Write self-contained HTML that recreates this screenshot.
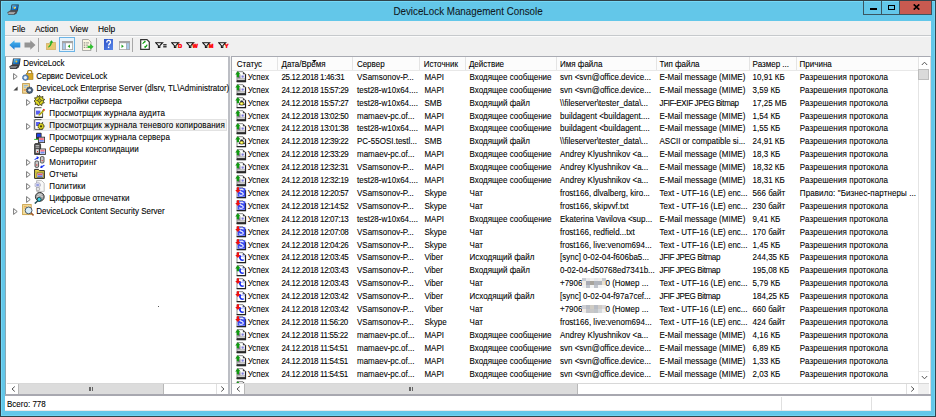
<!DOCTYPE html>
<html><head><meta charset="utf-8">
<style>
*{margin:0;padding:0;box-sizing:border-box}
html,body{width:936px;height:417px;overflow:hidden;background:#30444c}
body{position:relative;font-family:"Liberation Sans",sans-serif;color:#000}
.a{position:absolute}
#frame{position:absolute;left:1px;top:1px;width:934px;height:415px;background:#63c7e9;border-left:1px solid #76d8f6;border-top:1px solid #76d8f6;border-right:1px solid #70d4f2;border-bottom:1px solid #70d4f2}
#title{position:absolute;left:0;top:4.6px;width:936px;text-align:center;font-size:9.8px;color:#10181c;letter-spacing:0;transform:scaleY(1.1);transform-origin:0 0;-webkit-text-stroke:0.06px #000}
.cb{position:absolute;top:1px;height:13.5px;border:1px solid #3a5560;border-top:none}
#menu{position:absolute;left:5.3px;top:21.3px;width:625.4px;height:15px;background:#f0f0f0}
.mi{position:absolute;top:22.5px;font-size:8.4px;color:#000;transform:scaleY(1.15);transform-origin:0 0;-webkit-text-stroke:0.08px #000}
#tb{position:absolute;left:5.3px;top:36.3px;width:925.4px;height:20px;background:#f0f0f0}
.sep{position:absolute;top:37.5px;width:1px;height:14px;background:#a8a8a8}
.pane{position:absolute;background:#fff}
.tr{position:absolute;font-size:8px;color:#000;white-space:nowrap;line-height:12px;transform:scaleY(1.18);transform-origin:0 0;-webkit-text-stroke:0.08px #000}
.ex{position:absolute;width:0;height:0}
.t{position:absolute;font-size:8px;line-height:12.9px;white-space:nowrap;color:#000;transform:scaleY(1.18);transform-origin:0 0;-webkit-text-stroke:0.08px #000}
.t.d{letter-spacing:-0.34px}
.ic{position:absolute;width:12px;height:12px}
.ic svg{display:block}
.h{position:absolute;top:57.9px;font-size:8px;line-height:12.5px;white-space:nowrap;color:#000;transform:scaleY(1.18);transform-origin:0 0;-webkit-text-stroke:0.08px #000}
.hs{position:absolute;top:57.3px;width:1px;height:12.8px;background:#e4e4e4}
.blur{position:absolute;width:23.5px;height:8px;background:#d4d4d4}
.sb{position:absolute;background:#fff}
</style></head><body>
<div id="frame"></div>
<!-- app icon -->
<svg class="a" style="left:6.6px;top:4.2px" width="13" height="11" viewBox="0 0 13 11">
<defs><linearGradient id="scr" x1="0" x2="1" y1="0" y2="1"><stop offset="0" stop-color="#7ad0f8"/><stop offset="0.5" stop-color="#1878c8"/><stop offset="1" stop-color="#0a4a98"/></linearGradient></defs>
<path d="M4.6 0.5h7.2l-0.9 6.2h-7.4z" fill="#2a3440"/><path d="M5.3 1.2h5.8l-0.7 4.8h-6z" fill="url(#scr)"/>
<circle cx="7.6" cy="3.9" r="1.1" fill="#f0c840"/><circle cx="8.4" cy="3.2" r="0.6" fill="#ffffff" opacity="0.7"/>
<path d="M0.3 8.2l3.2-2h7.6l-1.6 3.2-1.8 1.4h-6.4z" fill="#4a4a4e"/><path d="M1.6 8.4h6.6M1.2 9.5h6" stroke="#d0d0d0" stroke-width="0.7"/>
</svg>
<div id="title">DeviceLock Management Console</div>
<div class="cb" style="left:863.3px;width:19px;"><div class="a" style="left:5.3px;top:7px;width:7.4px;height:2px;background:#000"></div></div>
<div class="cb" style="left:881.8px;width:18.6px;border-left:none"><div class="a" style="left:5.9px;top:3.6px;width:7.6px;height:5.8px;border:1.6px solid #000;border-top-width:1.9px"></div></div>
<div class="cb" style="left:900.2px;width:31.5px;background:#c75a50;border-left:none">
<svg class="a" style="left:12.6px;top:3.4px" width="7" height="6" viewBox="0 0 7 6"><path d="M0.7 0.4L6.3 5.6M6.3 0.4L0.7 5.6" stroke="#000" stroke-width="1.7"/></svg></div>
<!-- menu -->
<div class="a" style="left:5.3px;top:21.3px;width:925.4px;height:389.7px;background:#f0f0f0"></div>
<div class="mi" style="left:12px">File</div>
<div class="mi" style="left:35px">Action</div>
<div class="mi" style="left:70px">View</div>
<div class="mi" style="left:98px">Help</div>
<div id="tb"></div>
<div class="a" style="left:5.3px;top:35.4px;width:925.4px;height:1px;background:#c6c9cc"></div><div class="a" style="left:5.3px;top:36.4px;width:925.4px;height:1px;background:#fbfbfb"></div>
<!-- toolbar icons -->
<svg class="a" style="left:8.5px;top:40px" width="12" height="10" viewBox="0 0 12 10"><defs><linearGradient id="gb" x1="0" x2="0" y1="0" y2="1"><stop offset="0" stop-color="#4ab8f0"/><stop offset="1" stop-color="#1a78d0"/></linearGradient></defs>
<path d="M0.3 5L5.5 0.2V2.6H11.3V7.4H5.5V9.8z" fill="url(#gb)"/></svg>
<svg class="a" style="left:24px;top:40px" width="12" height="10" viewBox="0 0 12 10"><path d="M11.5 5L6.3 0.2V2.6H0.5V7.4H6.3V9.8z" fill="#949494"/></svg>
<div class="sep" style="left:38px"></div>
<svg class="a" style="left:46px;top:40px" width="10" height="10" viewBox="0 0 10 10"><path d="M0.3 3.5h3l1-1h5.4v7.2h-9.4z" fill="#e8c870" stroke="#c8a050" stroke-width="0.6"/><path d="M2 7q2-1 2.5-4.5l-1.2 0.2L5.5 0.3l1.8 2.2-1.3 0.2q-0.8 4-4 4.8z" fill="#20b020"/></svg>
<div class="a" style="left:58.9px;top:37.2px;width:16.1px;height:15.1px;border:1px solid #6cb4e6;background:#e6f2fb"></div>
<svg class="a" style="left:61.5px;top:41px" width="11" height="9" viewBox="0 0 11 9"><rect x="0" y="0" width="11" height="9" fill="#a4a4a4"/><rect x="0.8" y="2.2" width="2.6" height="6" fill="#a8c8e8"/><rect x="4" y="2.2" width="6.2" height="6" fill="#fff"/><path d="M8 3.5v3.5l-2.3-1.75z" fill="#20a020"/></svg>
<svg class="a" style="left:82px;top:39px" width="12" height="12" viewBox="0 0 12 12"><path d="M0.5 0.5h6l2.5 2.5v8.5h-8.5z" fill="#fbf7e0" stroke="#999" stroke-width="0.8"/><rect x="1.8" y="3.4" width="1" height="1" fill="#555"/><rect x="1.8" y="5.6" width="1" height="1" fill="#555"/><rect x="1.8" y="7.8" width="1" height="1" fill="#555"/><path d="M3.6 3.9h3.4M3.6 6.1h2.4M3.6 8.3h2" stroke="#777" stroke-width="0.7"/><path d="M5.6 6.8h2.6V4.8l3.4 3-3.4 3V9H5.6z" fill="#30c030"/></svg>
<div class="sep" style="left:95.5px"></div>
<svg class="a" style="left:103.8px;top:39px" width="9" height="11" viewBox="0 0 9 11"><defs><linearGradient id="gh" x1="0" x2="1" y1="0" y2="1"><stop offset="0" stop-color="#2a50c8"/><stop offset="1" stop-color="#5a88e8"/></linearGradient></defs><rect width="9" height="11" fill="url(#gh)"/><path d="M2.8 3.4q0-2 1.8-2q1.9 0 1.9 1.8q0 1-1.1 1.7q-0.7 0.5-0.7 1.6" stroke="#fff" stroke-width="1.3" fill="none"/><rect x="3.9" y="7.6" width="1.4" height="1.5" fill="#fff"/></svg>
<svg class="a" style="left:118.5px;top:41px" width="11" height="9" viewBox="0 0 11 9"><rect x="0" y="0" width="11" height="9" fill="#a4a4a4"/><rect x="0.8" y="2.2" width="6.2" height="6" fill="#fff"/><rect x="7.6" y="2.2" width="2.6" height="6" fill="#a8c8e8"/><path d="M2.5 3.5v3.5l2.3-1.75z" fill="#20a020"/></svg>
<div class="sep" style="left:132.3px"></div>
<svg class="a" style="left:140px;top:39px" width="10" height="11" viewBox="0 0 10 11"><path d="M0.7 0.7h6.3l2.3 2.3v7.3h-8.6z" fill="#fff" stroke="#333" stroke-width="1.2"/><path d="M2.8 5q0.4-2.2 2.4-2.2M7 5.6q-0.3 2.3-2.4 2.3" stroke="#10a010" stroke-width="1.1" fill="none"/><path d="M4.2 1.5l1.8 1.3-1.8 1.2zM5.8 9.2l-1.8-1.3 1.8-1.2z" fill="#10a010"/></svg>
<svg class="a" style="left:155px;top:41.5px" width="12" height="6" viewBox="0 0 12 6"><path d="M0.6 0.7h7l-2.8 3v2h-1.4v-2z" fill="#fff" stroke="#111" stroke-width="1.1"/><rect x="8.2" y="2.2" width="3.4" height="1.2" fill="#111"/><rect x="8.2" y="4.2" width="3.4" height="1.2" fill="#111"/></svg>
<svg class="a" style="left:170.5px;top:41.5px" width="13" height="6" viewBox="0 0 13 6"><path d="M0.6 0.7h7l-2.8 3v2h-1.4v-2z" fill="#fff" stroke="#111" stroke-width="1.1"/><text x="7" y="5.9" font-family="Liberation Sans" font-weight="bold" font-size="5.6" fill="#ff0000" stroke="#ff0000" stroke-width="0.45">D</text></svg>
<svg class="a" style="left:186.3px;top:41.5px" width="13" height="6" viewBox="0 0 13 6"><path d="M0.6 0.7h7l-2.8 3v2h-1.4v-2z" fill="#fff" stroke="#111" stroke-width="1.1"/><text x="6.6" y="5.9" font-family="Liberation Sans" font-weight="bold" font-size="5.6" fill="#ff0000" stroke="#ff0000" stroke-width="0.45">W</text></svg>
<svg class="a" style="left:201.8px;top:41.5px" width="13" height="6" viewBox="0 0 13 6"><path d="M0.6 0.7h7l-2.8 3v2h-1.4v-2z" fill="#fff" stroke="#111" stroke-width="1.1"/><text x="6.8" y="5.9" font-family="Liberation Sans" font-weight="bold" font-size="5.6" fill="#ff0000" stroke="#ff0000" stroke-width="0.45">M</text></svg>
<svg class="a" style="left:217.5px;top:41.5px" width="13" height="6" viewBox="0 0 13 6"><path d="M0.6 0.7h7l-2.8 3v2h-1.4v-2z" fill="#fff" stroke="#111" stroke-width="1.1"/><text x="6.8" y="5.9" font-family="Liberation Sans" font-weight="bold" font-size="5.6" fill="#ff0000" stroke="#ff0000" stroke-width="0.45">Y</text></svg>

<!-- tree pane -->
<div class="pane" style="left:5.2px;top:55.8px;width:224.6px;height:339px;border:1px solid #b4b6bc;border-left-color:#8aa8b2;border-right:2px solid #bcbec4"></div>
<!-- list pane -->
<div class="pane" style="left:231px;top:55.8px;width:699.5px;height:339px;border:1px solid #a8aab2;border-right-color:#d8d8d8"></div>
<div class="a" style="left:232px;top:57px;width:686px;height:14.1px;background:#fcfcfc;border-bottom:1px solid #e8e8e8"></div>
<div class="h" style="left:236.8px">Статус</div>
<div class="h" style="left:281.5px">Дата/Время</div>
<div class="h" style="left:356.9px">Сервер</div>
<div class="h" style="left:423.8px">Источник</div>
<div class="h" style="left:468.9px">Действие</div>
<div class="h" style="left:560px">Имя файла</div>
<div class="h" style="left:659.4px">Тип файла</div>
<div class="h" style="left:752.6px">Размер ...</div>
<div class="h" style="left:799.6px">Причина</div>
<div class="hs" style="left:277.2px"></div>
<div class="hs" style="left:352.3px"></div>
<div class="hs" style="left:419.3px"></div>
<div class="hs" style="left:465px"></div>
<div class="hs" style="left:555.5px"></div>
<div class="hs" style="left:655.5px"></div>
<div class="hs" style="left:749px"></div>
<div class="hs" style="left:795.5px"></div>
<svg class="a" style="left:312.2px;top:59.5px" width="5" height="3" viewBox="0 0 5 3"><path d="M0 0H4.6L2.3 2.4Z" fill="#111"/></svg>
<div class="a" style="left:0;top:0;width:936px;height:383.2px;overflow:hidden">
<div class="ic" style="left:234.5px;top:71.30px"><svg width="12" height="12" viewBox="0 0 12 12"><path d="M2 0.7H7.9L10.5 3.3V10.6H2Z" fill="#fff" stroke="#7a7a7a" stroke-width="0.9"/><path d="M10.5 3.2V10.7H1.6" stroke="#222" stroke-width="1.2" fill="none"/><path d="M7.9 0.7V3.3H10.5Z" fill="#444"/><rect x="2.2" y="7.4" width="8" height="1" fill="#8a8a8a"/><rect x="1.8" y="9.1" width="9" height="1.8" fill="#2a2a2a"/><rect x="5.4" y="3.9" width="4.4" height="3.3" fill="#e4e4ec"/><circle cx="7.7" cy="5.6" r="1.1" fill="#7a7ae0"/><rect x="2.4" y="4.2" width="3" height="3" fill="#8a7a90"/><path d="M0.2 3.5L2.9 0.3L5.6 3.5H4V6.3H1.8V3.5Z" fill="#109a10"/></svg></div>
<div class="t" style="left:247.8px;top:70.80px">Успех</div>
<div class="t d" style="left:281.5px;top:70.80px">25.12.2018 1:46:31</div>
<div class="t" style="left:357px;top:70.80px">VSamsonov-P...</div>
<div class="t" style="left:424.4px;top:70.80px">MAPI</div>
<div class="t" style="left:469.6px;top:70.80px">Входящее сообщение</div>
<div class="t" style="left:560px;top:70.80px">svn &lt;svn@office.device...</div>
<div class="t" style="left:659.5px;top:70.80px">E-Mail message (MIME)</div>
<div class="t" style="left:752.6px;top:70.80px">10,91 КБ</div>
<div class="t" style="left:799.8px;top:70.80px;letter-spacing:0.1px">Разрешения протокола</div>
<div class="ic" style="left:234.5px;top:84.20px"><svg width="12" height="12" viewBox="0 0 12 12"><path d="M2 0.7H7.9L10.5 3.3V10.6H2Z" fill="#fff" stroke="#7a7a7a" stroke-width="0.9"/><path d="M10.5 3.2V10.7H1.6" stroke="#222" stroke-width="1.2" fill="none"/><path d="M7.9 0.7V3.3H10.5Z" fill="#444"/><rect x="2.2" y="7.4" width="8" height="1" fill="#8a8a8a"/><rect x="1.8" y="9.1" width="9" height="1.8" fill="#2a2a2a"/><rect x="5.4" y="3.9" width="4.4" height="3.3" fill="#e4e4ec"/><circle cx="7.7" cy="5.6" r="1.1" fill="#7a7ae0"/><rect x="2.4" y="4.2" width="3" height="3" fill="#8a7a90"/><path d="M0.2 3.5L2.9 0.3L5.6 3.5H4V6.3H1.8V3.5Z" fill="#109a10"/></svg></div>
<div class="t" style="left:247.8px;top:83.70px">Успех</div>
<div class="t d" style="left:281.5px;top:83.70px">24.12.2018 15:57:29</div>
<div class="t" style="left:357px;top:83.70px">test28-w10x64....</div>
<div class="t" style="left:424.4px;top:83.70px">MAPI</div>
<div class="t" style="left:469.6px;top:83.70px">Входящее сообщение</div>
<div class="t" style="left:560px;top:83.70px">svn &lt;svn@office.device...</div>
<div class="t" style="left:659.5px;top:83.70px">E-Mail message (MIME)</div>
<div class="t" style="left:752.6px;top:83.70px">3,59 КБ</div>
<div class="t" style="left:799.8px;top:83.70px;letter-spacing:0.1px">Разрешения протокола</div>
<div class="ic" style="left:234.5px;top:97.10px"><svg width="12" height="12" viewBox="0 0 12 12"><path d="M2 0.7H7.9L10.5 3.3V10.6H2Z" fill="#fff" stroke="#7a7a7a" stroke-width="0.9"/><path d="M10.5 3.2V10.7H1.6" stroke="#222" stroke-width="1.2" fill="none"/><path d="M7.9 0.7V3.3H10.5Z" fill="#444"/><path d="M3.6 7.8Q5.6 2.8 7.4 3.4Q8.6 4.4 10 7.8Q6.8 9.4 3.6 7.8Z" fill="#2a2a3a"/><ellipse cx="6.7" cy="6.6" rx="1.9" ry="1.3" fill="#e8e020"/><ellipse cx="6.5" cy="6.4" rx="0.9" ry="0.6" fill="#fffca0"/><path d="M0.2 3.5L2.9 0.3L5.6 3.5H4V6.3H1.8V3.5Z" fill="#109a10"/></svg></div>
<div class="t" style="left:247.8px;top:96.60px">Успех</div>
<div class="t d" style="left:281.5px;top:96.60px">24.12.2018 15:57:27</div>
<div class="t" style="left:357px;top:96.60px">test28-w10x64....</div>
<div class="t" style="left:424.4px;top:96.60px">SMB</div>
<div class="t" style="left:469.6px;top:96.60px">Входящий файл</div>
<div class="t" style="left:560px;top:96.60px">\\fileserver\tester_data\...</div>
<div class="t" style="left:659.5px;top:96.60px;letter-spacing:-0.36px">JFIF-EXIF JPEG Bitmap</div>
<div class="t" style="left:752.6px;top:96.60px">17,25 МБ</div>
<div class="t" style="left:799.8px;top:96.60px;letter-spacing:0.1px">Разрешения протокола</div>
<div class="ic" style="left:234.5px;top:110.00px"><svg width="12" height="12" viewBox="0 0 12 12"><path d="M2 0.7H7.9L10.5 3.3V10.6H2Z" fill="#fff" stroke="#7a7a7a" stroke-width="0.9"/><path d="M10.5 3.2V10.7H1.6" stroke="#222" stroke-width="1.2" fill="none"/><path d="M7.9 0.7V3.3H10.5Z" fill="#444"/><rect x="2.2" y="7.4" width="8" height="1" fill="#8a8a8a"/><rect x="1.8" y="9.1" width="9" height="1.8" fill="#2a2a2a"/><rect x="5.4" y="3.9" width="4.4" height="3.3" fill="#e4e4ec"/><circle cx="7.7" cy="5.6" r="1.1" fill="#7a7ae0"/><rect x="2.4" y="4.2" width="3" height="3" fill="#8a7a90"/><path d="M0.2 3.5L2.9 0.3L5.6 3.5H4V6.3H1.8V3.5Z" fill="#109a10"/></svg></div>
<div class="t" style="left:247.8px;top:109.50px">Успех</div>
<div class="t d" style="left:281.5px;top:109.50px">24.12.2018 13:02:50</div>
<div class="t" style="left:357px;top:109.50px">mamaev-pc.of...</div>
<div class="t" style="left:424.4px;top:109.50px">MAPI</div>
<div class="t" style="left:469.6px;top:109.50px">Входящее сообщение</div>
<div class="t" style="left:560px;top:109.50px">buildagent &lt;buildagent....</div>
<div class="t" style="left:659.5px;top:109.50px">E-Mail message (MIME)</div>
<div class="t" style="left:752.6px;top:109.50px">1,54 КБ</div>
<div class="t" style="left:799.8px;top:109.50px;letter-spacing:0.1px">Разрешения протокола</div>
<div class="ic" style="left:234.5px;top:122.90px"><svg width="12" height="12" viewBox="0 0 12 12"><path d="M2 0.7H7.9L10.5 3.3V10.6H2Z" fill="#fff" stroke="#7a7a7a" stroke-width="0.9"/><path d="M10.5 3.2V10.7H1.6" stroke="#222" stroke-width="1.2" fill="none"/><path d="M7.9 0.7V3.3H10.5Z" fill="#444"/><rect x="2.2" y="7.4" width="8" height="1" fill="#8a8a8a"/><rect x="1.8" y="9.1" width="9" height="1.8" fill="#2a2a2a"/><rect x="5.4" y="3.9" width="4.4" height="3.3" fill="#e4e4ec"/><circle cx="7.7" cy="5.6" r="1.1" fill="#7a7ae0"/><rect x="2.4" y="4.2" width="3" height="3" fill="#8a7a90"/><path d="M0.2 3.5L2.9 0.3L5.6 3.5H4V6.3H1.8V3.5Z" fill="#109a10"/></svg></div>
<div class="t" style="left:247.8px;top:122.40px">Успех</div>
<div class="t d" style="left:281.5px;top:122.40px">24.12.2018 13:01:38</div>
<div class="t" style="left:357px;top:122.40px">test28-w10x64....</div>
<div class="t" style="left:424.4px;top:122.40px">MAPI</div>
<div class="t" style="left:469.6px;top:122.40px">Входящее сообщение</div>
<div class="t" style="left:560px;top:122.40px">buildagent &lt;buildagent....</div>
<div class="t" style="left:659.5px;top:122.40px">E-Mail message (MIME)</div>
<div class="t" style="left:752.6px;top:122.40px">1,55 КБ</div>
<div class="t" style="left:799.8px;top:122.40px;letter-spacing:0.1px">Разрешения протокола</div>
<div class="ic" style="left:234.5px;top:135.80px"><svg width="12" height="12" viewBox="0 0 12 12"><path d="M2 0.7H7.9L10.5 3.3V10.6H2Z" fill="#fff" stroke="#7a7a7a" stroke-width="0.9"/><path d="M10.5 3.2V10.7H1.6" stroke="#222" stroke-width="1.2" fill="none"/><path d="M7.9 0.7V3.3H10.5Z" fill="#444"/><path d="M3.6 7.8Q5.6 2.8 7.4 3.4Q8.6 4.4 10 7.8Q6.8 9.4 3.6 7.8Z" fill="#2a2a3a"/><ellipse cx="6.7" cy="6.6" rx="1.9" ry="1.3" fill="#e8e020"/><ellipse cx="6.5" cy="6.4" rx="0.9" ry="0.6" fill="#fffca0"/><path d="M0.2 3.5L2.9 0.3L5.6 3.5H4V6.3H1.8V3.5Z" fill="#109a10"/></svg></div>
<div class="t" style="left:247.8px;top:135.30px">Успех</div>
<div class="t d" style="left:281.5px;top:135.30px">24.12.2018 12:39:22</div>
<div class="t" style="left:357px;top:135.30px">PC-55OSI.testl...</div>
<div class="t" style="left:424.4px;top:135.30px">SMB</div>
<div class="t" style="left:469.6px;top:135.30px">Входящий файл</div>
<div class="t" style="left:560px;top:135.30px">\\fileserver\tester_data\...</div>
<div class="t" style="left:659.5px;top:135.30px">ASCII or compatible si...</div>
<div class="t" style="left:752.6px;top:135.30px">24,91 КБ</div>
<div class="t" style="left:799.8px;top:135.30px;letter-spacing:0.1px">Разрешения протокола</div>
<div class="ic" style="left:234.5px;top:148.70px"><svg width="12" height="12" viewBox="0 0 12 12"><path d="M2 0.7H7.9L10.5 3.3V10.6H2Z" fill="#fff" stroke="#7a7a7a" stroke-width="0.9"/><path d="M10.5 3.2V10.7H1.6" stroke="#222" stroke-width="1.2" fill="none"/><path d="M7.9 0.7V3.3H10.5Z" fill="#444"/><rect x="2.2" y="7.4" width="8" height="1" fill="#8a8a8a"/><rect x="1.8" y="9.1" width="9" height="1.8" fill="#2a2a2a"/><rect x="5.4" y="3.9" width="4.4" height="3.3" fill="#e4e4ec"/><circle cx="7.7" cy="5.6" r="1.1" fill="#7a7ae0"/><rect x="2.4" y="4.2" width="3" height="3" fill="#8a7a90"/><path d="M0.2 3.5L2.9 0.3L5.6 3.5H4V6.3H1.8V3.5Z" fill="#109a10"/></svg></div>
<div class="t" style="left:247.8px;top:148.20px">Успех</div>
<div class="t d" style="left:281.5px;top:148.20px">24.12.2018 12:33:29</div>
<div class="t" style="left:357px;top:148.20px">mamaev-pc.of...</div>
<div class="t" style="left:424.4px;top:148.20px">MAPI</div>
<div class="t" style="left:469.6px;top:148.20px">Входящее сообщение</div>
<div class="t" style="left:560px;top:148.20px">Andrey Klyushnikov &lt;a...</div>
<div class="t" style="left:659.5px;top:148.20px">E-Mail message (MIME)</div>
<div class="t" style="left:752.6px;top:148.20px">18,3 КБ</div>
<div class="t" style="left:799.8px;top:148.20px;letter-spacing:0.1px">Разрешения протокола</div>
<div class="ic" style="left:234.5px;top:161.60px"><svg width="12" height="12" viewBox="0 0 12 12"><path d="M2 0.7H7.9L10.5 3.3V10.6H2Z" fill="#fff" stroke="#7a7a7a" stroke-width="0.9"/><path d="M10.5 3.2V10.7H1.6" stroke="#222" stroke-width="1.2" fill="none"/><path d="M7.9 0.7V3.3H10.5Z" fill="#444"/><rect x="2.2" y="7.4" width="8" height="1" fill="#8a8a8a"/><rect x="1.8" y="9.1" width="9" height="1.8" fill="#2a2a2a"/><rect x="5.4" y="3.9" width="4.4" height="3.3" fill="#e4e4ec"/><circle cx="7.7" cy="5.6" r="1.1" fill="#7a7ae0"/><rect x="2.4" y="4.2" width="3" height="3" fill="#8a7a90"/><path d="M0.2 3.5L2.9 0.3L5.6 3.5H4V6.3H1.8V3.5Z" fill="#109a10"/></svg></div>
<div class="t" style="left:247.8px;top:161.10px">Успех</div>
<div class="t d" style="left:281.5px;top:161.10px">24.12.2018 12:32:31</div>
<div class="t" style="left:357px;top:161.10px">VSamsonov-P...</div>
<div class="t" style="left:424.4px;top:161.10px">MAPI</div>
<div class="t" style="left:469.6px;top:161.10px">Входящее сообщение</div>
<div class="t" style="left:560px;top:161.10px">Andrey Klyushnikov &lt;a...</div>
<div class="t" style="left:659.5px;top:161.10px">E-Mail message (MIME)</div>
<div class="t" style="left:752.6px;top:161.10px">18,32 КБ</div>
<div class="t" style="left:799.8px;top:161.10px;letter-spacing:0.1px">Разрешения протокола</div>
<div class="ic" style="left:234.5px;top:174.50px"><svg width="12" height="12" viewBox="0 0 12 12"><path d="M2 0.7H7.9L10.5 3.3V10.6H2Z" fill="#fff" stroke="#7a7a7a" stroke-width="0.9"/><path d="M10.5 3.2V10.7H1.6" stroke="#222" stroke-width="1.2" fill="none"/><path d="M7.9 0.7V3.3H10.5Z" fill="#444"/><rect x="2.2" y="7.4" width="8" height="1" fill="#8a8a8a"/><rect x="1.8" y="9.1" width="9" height="1.8" fill="#2a2a2a"/><rect x="5.4" y="3.9" width="4.4" height="3.3" fill="#e4e4ec"/><circle cx="7.7" cy="5.6" r="1.1" fill="#7a7ae0"/><rect x="2.4" y="4.2" width="3" height="3" fill="#8a7a90"/><path d="M0.2 3.5L2.9 0.3L5.6 3.5H4V6.3H1.8V3.5Z" fill="#109a10"/></svg></div>
<div class="t" style="left:247.8px;top:174.00px">Успех</div>
<div class="t d" style="left:281.5px;top:174.00px">24.12.2018 12:32:19</div>
<div class="t" style="left:357px;top:174.00px">test28-w10x64....</div>
<div class="t" style="left:424.4px;top:174.00px">MAPI</div>
<div class="t" style="left:469.6px;top:174.00px">Входящее сообщение</div>
<div class="t" style="left:560px;top:174.00px">Andrey Klyushnikov &lt;a...</div>
<div class="t" style="left:659.5px;top:174.00px">E-Mail message (MIME)</div>
<div class="t" style="left:752.6px;top:174.00px">18,31 КБ</div>
<div class="t" style="left:799.8px;top:174.00px;letter-spacing:0.1px">Разрешения протокола</div>
<div class="ic" style="left:234.5px;top:187.40px"><svg width="12" height="12" viewBox="0 0 12 12"><path d="M2 0.7H7.9L10.5 3.3V10.6H2Z" fill="#fff" stroke="#7a7a7a" stroke-width="0.9"/><path d="M10.5 3.2V10.7H1.6" stroke="#222" stroke-width="1.2" fill="none"/><path d="M7.9 0.7V3.3H10.5Z" fill="#444"/><rect x="2.7" y="1.3" width="7.6" height="8.4" fill="#3848f0"/><path d="M8.6 3.2Q7 1.8 5.2 2.8Q3.8 3.8 5.6 4.9L7.4 5.8Q9 7 7.6 8Q5.6 8.9 4 7.6" stroke="#e8ecff" stroke-width="1.2" fill="none"/><path d="M1.8 0.3H4V3.1H5.6L2.9 6.1L0.2 3.1H1.8Z" fill="#f01010"/></svg></div>
<div class="t" style="left:247.8px;top:186.90px">Успех</div>
<div class="t d" style="left:281.5px;top:186.90px">24.12.2018 12:20:57</div>
<div class="t" style="left:357px;top:186.90px">VSamsonov-P...</div>
<div class="t" style="left:424.4px;top:186.90px">Skype</div>
<div class="t" style="left:469.6px;top:186.90px">Чат</div>
<div class="t" style="left:560px;top:186.90px">frost166, dlvalberg, kiro...</div>
<div class="t" style="left:659.5px;top:186.90px">Text - UTF-16 (LE) enc...</div>
<div class="t" style="left:752.6px;top:186.90px">566 байт</div>
<div class="t" style="left:799.8px;top:186.90px;letter-spacing:0.1px">Правило: "Бизнес-партнеры ...</div>
<div class="ic" style="left:234.5px;top:200.30px"><svg width="12" height="12" viewBox="0 0 12 12"><path d="M2 0.7H7.9L10.5 3.3V10.6H2Z" fill="#fff" stroke="#7a7a7a" stroke-width="0.9"/><path d="M10.5 3.2V10.7H1.6" stroke="#222" stroke-width="1.2" fill="none"/><path d="M7.9 0.7V3.3H10.5Z" fill="#444"/><rect x="2.7" y="1.3" width="7.6" height="8.4" fill="#3848f0"/><path d="M8.6 3.2Q7 1.8 5.2 2.8Q3.8 3.8 5.6 4.9L7.4 5.8Q9 7 7.6 8Q5.6 8.9 4 7.6" stroke="#e8ecff" stroke-width="1.2" fill="none"/><path d="M1.8 0.3H4V3.1H5.6L2.9 6.1L0.2 3.1H1.8Z" fill="#f01010"/></svg></div>
<div class="t" style="left:247.8px;top:199.80px">Успех</div>
<div class="t d" style="left:281.5px;top:199.80px">24.12.2018 12:14:52</div>
<div class="t" style="left:357px;top:199.80px">VSamsonov-P...</div>
<div class="t" style="left:424.4px;top:199.80px">Skype</div>
<div class="t" style="left:469.6px;top:199.80px">Чат</div>
<div class="t" style="left:560px;top:199.80px">frost166, skipvvf.txt</div>
<div class="t" style="left:659.5px;top:199.80px">Text - UTF-16 (LE) enc...</div>
<div class="t" style="left:752.6px;top:199.80px">230 байт</div>
<div class="t" style="left:799.8px;top:199.80px;letter-spacing:0.1px">Разрешения протокола</div>
<div class="ic" style="left:234.5px;top:213.20px"><svg width="12" height="12" viewBox="0 0 12 12"><path d="M2 0.7H7.9L10.5 3.3V10.6H2Z" fill="#fff" stroke="#7a7a7a" stroke-width="0.9"/><path d="M10.5 3.2V10.7H1.6" stroke="#222" stroke-width="1.2" fill="none"/><path d="M7.9 0.7V3.3H10.5Z" fill="#444"/><rect x="2.2" y="7.4" width="8" height="1" fill="#8a8a8a"/><rect x="1.8" y="9.1" width="9" height="1.8" fill="#2a2a2a"/><rect x="5.4" y="3.9" width="4.4" height="3.3" fill="#e4e4ec"/><circle cx="7.7" cy="5.6" r="1.1" fill="#7a7ae0"/><rect x="2.4" y="4.2" width="3" height="3" fill="#8a7a90"/><path d="M0.2 3.5L2.9 0.3L5.6 3.5H4V6.3H1.8V3.5Z" fill="#109a10"/></svg></div>
<div class="t" style="left:247.8px;top:212.70px">Успех</div>
<div class="t d" style="left:281.5px;top:212.70px">24.12.2018 12:07:13</div>
<div class="t" style="left:357px;top:212.70px">test28-w10x64....</div>
<div class="t" style="left:424.4px;top:212.70px">MAPI</div>
<div class="t" style="left:469.6px;top:212.70px">Входящее сообщение</div>
<div class="t" style="left:560px;top:212.70px">Ekaterina Vavilova &lt;sup...</div>
<div class="t" style="left:659.5px;top:212.70px">E-Mail message (MIME)</div>
<div class="t" style="left:752.6px;top:212.70px">9,41 КБ</div>
<div class="t" style="left:799.8px;top:212.70px;letter-spacing:0.1px">Разрешения протокола</div>
<div class="ic" style="left:234.5px;top:226.10px"><svg width="12" height="12" viewBox="0 0 12 12"><path d="M2 0.7H7.9L10.5 3.3V10.6H2Z" fill="#fff" stroke="#7a7a7a" stroke-width="0.9"/><path d="M10.5 3.2V10.7H1.6" stroke="#222" stroke-width="1.2" fill="none"/><path d="M7.9 0.7V3.3H10.5Z" fill="#444"/><rect x="2.7" y="1.3" width="7.6" height="8.4" fill="#3848f0"/><path d="M8.6 3.2Q7 1.8 5.2 2.8Q3.8 3.8 5.6 4.9L7.4 5.8Q9 7 7.6 8Q5.6 8.9 4 7.6" stroke="#e8ecff" stroke-width="1.2" fill="none"/><path d="M1.8 0.3H4V3.1H5.6L2.9 6.1L0.2 3.1H1.8Z" fill="#f01010"/></svg></div>
<div class="t" style="left:247.8px;top:225.60px">Успех</div>
<div class="t d" style="left:281.5px;top:225.60px">24.12.2018 12:07:08</div>
<div class="t" style="left:357px;top:225.60px">VSamsonov-P...</div>
<div class="t" style="left:424.4px;top:225.60px">Skype</div>
<div class="t" style="left:469.6px;top:225.60px">Чат</div>
<div class="t" style="left:560px;top:225.60px">frost166, redfield...txt</div>
<div class="t" style="left:659.5px;top:225.60px">Text - UTF-16 (LE) enc...</div>
<div class="t" style="left:752.6px;top:225.60px">170 байт</div>
<div class="t" style="left:799.8px;top:225.60px;letter-spacing:0.1px">Разрешения протокола</div>
<div class="ic" style="left:234.5px;top:239.00px"><svg width="12" height="12" viewBox="0 0 12 12"><path d="M2 0.7H7.9L10.5 3.3V10.6H2Z" fill="#fff" stroke="#7a7a7a" stroke-width="0.9"/><path d="M10.5 3.2V10.7H1.6" stroke="#222" stroke-width="1.2" fill="none"/><path d="M7.9 0.7V3.3H10.5Z" fill="#444"/><rect x="2.7" y="1.3" width="7.6" height="8.4" fill="#3848f0"/><path d="M8.6 3.2Q7 1.8 5.2 2.8Q3.8 3.8 5.6 4.9L7.4 5.8Q9 7 7.6 8Q5.6 8.9 4 7.6" stroke="#e8ecff" stroke-width="1.2" fill="none"/><path d="M1.8 0.3H4V3.1H5.6L2.9 6.1L0.2 3.1H1.8Z" fill="#f01010"/></svg></div>
<div class="t" style="left:247.8px;top:238.50px">Успех</div>
<div class="t d" style="left:281.5px;top:238.50px">24.12.2018 12:04:26</div>
<div class="t" style="left:357px;top:238.50px">VSamsonov-P...</div>
<div class="t" style="left:424.4px;top:238.50px">Skype</div>
<div class="t" style="left:469.6px;top:238.50px">Чат</div>
<div class="t" style="left:560px;top:238.50px">frost166, live:venom694...</div>
<div class="t" style="left:659.5px;top:238.50px">Text - UTF-16 (LE) enc...</div>
<div class="t" style="left:752.6px;top:238.50px">1,45 КБ</div>
<div class="t" style="left:799.8px;top:238.50px;letter-spacing:0.1px">Разрешения протокола</div>
<div class="ic" style="left:234.5px;top:251.90px"><svg width="12" height="12" viewBox="0 0 12 12"><path d="M2 0.7H7.9L10.5 3.3V10.6H2Z" fill="#fff" stroke="#7a7a7a" stroke-width="0.9"/><path d="M10.5 3.2V10.7H1.6" stroke="#222" stroke-width="1.2" fill="none"/><path d="M7.9 0.7V3.3H10.5Z" fill="#444"/><path d="M4.2 3.8Q3.2 6.4 5.2 8.2Q7 9.6 9 8.6L8.6 7.3L7.2 7.6Q5.6 6.8 5.8 5.2L6.6 4.5L5.6 3.3Z" fill="#1a30f0"/><path d="M7 2.4Q9.2 2.8 9.6 5M6.8 3.8Q8.2 4 8.4 5.4" stroke="#98a8ff" stroke-width="0.9" fill="none"/><path d="M1.8 0.3H4V3.1H5.6L2.9 6.1L0.2 3.1H1.8Z" fill="#f01010"/></svg></div>
<div class="t" style="left:247.8px;top:251.40px">Успех</div>
<div class="t d" style="left:281.5px;top:251.40px">24.12.2018 12:03:45</div>
<div class="t" style="left:357px;top:251.40px">VSamsonov-P...</div>
<div class="t" style="left:424.4px;top:251.40px">Viber</div>
<div class="t" style="left:469.6px;top:251.40px">Исходящий файл</div>
<div class="t" style="left:560px;top:251.40px">[sync] 0-02-04-f606ba5...</div>
<div class="t" style="left:659.5px;top:251.40px;letter-spacing:-0.36px">JFIF JPEG Bitmap</div>
<div class="t" style="left:752.6px;top:251.40px">244,35 КБ</div>
<div class="t" style="left:799.8px;top:251.40px;letter-spacing:0.1px">Разрешения протокола</div>
<div class="ic" style="left:234.5px;top:264.80px"><svg width="12" height="12" viewBox="0 0 12 12"><path d="M2 0.7H7.9L10.5 3.3V10.6H2Z" fill="#fff" stroke="#7a7a7a" stroke-width="0.9"/><path d="M10.5 3.2V10.7H1.6" stroke="#222" stroke-width="1.2" fill="none"/><path d="M7.9 0.7V3.3H10.5Z" fill="#444"/><path d="M4.2 3.8Q3.2 6.4 5.2 8.2Q7 9.6 9 8.6L8.6 7.3L7.2 7.6Q5.6 6.8 5.8 5.2L6.6 4.5L5.6 3.3Z" fill="#1a30f0"/><path d="M7 2.4Q9.2 2.8 9.6 5M6.8 3.8Q8.2 4 8.4 5.4" stroke="#98a8ff" stroke-width="0.9" fill="none"/><path d="M0.2 3.5L2.9 0.3L5.6 3.5H4V6.3H1.8V3.5Z" fill="#109a10"/></svg></div>
<div class="t" style="left:247.8px;top:264.30px">Успех</div>
<div class="t d" style="left:281.5px;top:264.30px">24.12.2018 12:03:43</div>
<div class="t" style="left:357px;top:264.30px">VSamsonov-P...</div>
<div class="t" style="left:424.4px;top:264.30px">Viber</div>
<div class="t" style="left:469.6px;top:264.30px">Входящий файл</div>
<div class="t" style="left:560px;top:264.30px">0-02-04-d50768ed7341b...</div>
<div class="t" style="left:659.5px;top:264.30px;letter-spacing:-0.36px">JFIF JPEG Bitmap</div>
<div class="t" style="left:752.6px;top:264.30px">195,08 КБ</div>
<div class="t" style="left:799.8px;top:264.30px;letter-spacing:0.1px">Разрешения протокола</div>
<div class="ic" style="left:234.5px;top:277.70px"><svg width="12" height="12" viewBox="0 0 12 12"><path d="M2 0.7H7.9L10.5 3.3V10.6H2Z" fill="#fff" stroke="#7a7a7a" stroke-width="0.9"/><path d="M10.5 3.2V10.7H1.6" stroke="#222" stroke-width="1.2" fill="none"/><path d="M7.9 0.7V3.3H10.5Z" fill="#444"/><path d="M4.2 3.8Q3.2 6.4 5.2 8.2Q7 9.6 9 8.6L8.6 7.3L7.2 7.6Q5.6 6.8 5.8 5.2L6.6 4.5L5.6 3.3Z" fill="#1a30f0"/><path d="M7 2.4Q9.2 2.8 9.6 5M6.8 3.8Q8.2 4 8.4 5.4" stroke="#98a8ff" stroke-width="0.9" fill="none"/><path d="M1.8 0.3H4V3.1H5.6L2.9 6.1L0.2 3.1H1.8Z" fill="#f01010"/></svg></div>
<div class="t" style="left:247.8px;top:277.20px">Успех</div>
<div class="t d" style="left:281.5px;top:277.20px">24.12.2018 12:03:43</div>
<div class="t" style="left:357px;top:277.20px">VSamsonov-P...</div>
<div class="t" style="left:424.4px;top:277.20px">Viber</div>
<div class="t" style="left:469.6px;top:277.20px">Чат</div>
<div class="t" style="left:560px;top:277.20px">+7906</div>
<div class="a" style="left:582.0px;top:278.10px;width:4px;height:2.9px;background:#c8ccd4"></div><div class="a" style="left:586.0px;top:278.10px;width:4px;height:2.9px;background:#e8e8ea"></div><div class="a" style="left:590.0px;top:278.10px;width:4px;height:2.9px;background:#f0f0f0"></div><div class="a" style="left:594.0px;top:278.10px;width:4px;height:2.9px;background:#e8e8ea"></div><div class="a" style="left:598.0px;top:278.10px;width:4px;height:2.9px;background:#f0eeea"></div><div class="a" style="left:602.0px;top:278.10px;width:4px;height:2.9px;background:#c8ccd4"></div><div class="a" style="left:582.0px;top:281.00px;width:4px;height:4.1px;background:#f0ece4"></div><div class="a" style="left:586.0px;top:281.00px;width:4px;height:4.1px;background:#a8aab4"></div><div class="a" style="left:590.0px;top:281.00px;width:4px;height:4.1px;background:#a8a49c"></div><div class="a" style="left:594.0px;top:281.00px;width:4px;height:4.1px;background:#b0b4bc"></div><div class="a" style="left:598.0px;top:281.00px;width:4px;height:4.1px;background:#b0b4bc"></div><div class="a" style="left:602.0px;top:281.00px;width:4px;height:4.1px;background:#e8e0d0"></div><div class="a" style="left:582.0px;top:285.10px;width:4px;height:2.7px;background:#f0f0f0"></div><div class="a" style="left:586.0px;top:285.10px;width:4px;height:2.7px;background:#c0c4cc"></div><div class="a" style="left:590.0px;top:285.10px;width:4px;height:2.7px;background:#f4f4f4"></div><div class="a" style="left:594.0px;top:285.10px;width:4px;height:2.7px;background:#c0c4cc"></div><div class="a" style="left:598.0px;top:285.10px;width:4px;height:2.7px;background:#f4f4f4"></div><div class="a" style="left:602.0px;top:285.10px;width:4px;height:2.7px;background:#f8f8f8"></div>
<div class="t" style="left:605.5px;top:277.20px">0 (Номер ...</div>
<div class="t" style="left:659.5px;top:277.20px">Text - UTF-16 (LE) enc...</div>
<div class="t" style="left:752.6px;top:277.20px">5,79 КБ</div>
<div class="t" style="left:799.8px;top:277.20px;letter-spacing:0.1px">Разрешения протокола</div>
<div class="ic" style="left:234.5px;top:290.60px"><svg width="12" height="12" viewBox="0 0 12 12"><path d="M2 0.7H7.9L10.5 3.3V10.6H2Z" fill="#fff" stroke="#7a7a7a" stroke-width="0.9"/><path d="M10.5 3.2V10.7H1.6" stroke="#222" stroke-width="1.2" fill="none"/><path d="M7.9 0.7V3.3H10.5Z" fill="#444"/><path d="M4.2 3.8Q3.2 6.4 5.2 8.2Q7 9.6 9 8.6L8.6 7.3L7.2 7.6Q5.6 6.8 5.8 5.2L6.6 4.5L5.6 3.3Z" fill="#1a30f0"/><path d="M7 2.4Q9.2 2.8 9.6 5M6.8 3.8Q8.2 4 8.4 5.4" stroke="#98a8ff" stroke-width="0.9" fill="none"/><path d="M1.8 0.3H4V3.1H5.6L2.9 6.1L0.2 3.1H1.8Z" fill="#f01010"/></svg></div>
<div class="t" style="left:247.8px;top:290.10px">Успех</div>
<div class="t d" style="left:281.5px;top:290.10px">24.12.2018 12:03:42</div>
<div class="t" style="left:357px;top:290.10px">VSamsonov-P...</div>
<div class="t" style="left:424.4px;top:290.10px">Viber</div>
<div class="t" style="left:469.6px;top:290.10px">Исходящий файл</div>
<div class="t" style="left:560px;top:290.10px">[sync] 0-02-04-f97a7cef...</div>
<div class="t" style="left:659.5px;top:290.10px;letter-spacing:-0.36px">JFIF JPEG Bitmap</div>
<div class="t" style="left:752.6px;top:290.10px">184,25 КБ</div>
<div class="t" style="left:799.8px;top:290.10px;letter-spacing:0.1px">Разрешения протокола</div>
<div class="ic" style="left:234.5px;top:303.50px"><svg width="12" height="12" viewBox="0 0 12 12"><path d="M2 0.7H7.9L10.5 3.3V10.6H2Z" fill="#fff" stroke="#7a7a7a" stroke-width="0.9"/><path d="M10.5 3.2V10.7H1.6" stroke="#222" stroke-width="1.2" fill="none"/><path d="M7.9 0.7V3.3H10.5Z" fill="#444"/><path d="M4.2 3.8Q3.2 6.4 5.2 8.2Q7 9.6 9 8.6L8.6 7.3L7.2 7.6Q5.6 6.8 5.8 5.2L6.6 4.5L5.6 3.3Z" fill="#1a30f0"/><path d="M7 2.4Q9.2 2.8 9.6 5M6.8 3.8Q8.2 4 8.4 5.4" stroke="#98a8ff" stroke-width="0.9" fill="none"/><path d="M1.8 0.3H4V3.1H5.6L2.9 6.1L0.2 3.1H1.8Z" fill="#f01010"/></svg></div>
<div class="t" style="left:247.8px;top:303.00px">Успех</div>
<div class="t d" style="left:281.5px;top:303.00px">24.12.2018 12:03:42</div>
<div class="t" style="left:357px;top:303.00px">VSamsonov-P...</div>
<div class="t" style="left:424.4px;top:303.00px">Viber</div>
<div class="t" style="left:469.6px;top:303.00px">Чат</div>
<div class="t" style="left:560px;top:303.00px">+7906</div>
<div class="a" style="left:582.0px;top:305.10px;width:4px;height:3.9px;background:#d0d0d4"></div><div class="a" style="left:586.0px;top:305.10px;width:4px;height:3.9px;background:#b8bcc4"></div><div class="a" style="left:590.0px;top:305.10px;width:4px;height:3.9px;background:#d0ccc4"></div><div class="a" style="left:594.0px;top:305.10px;width:4px;height:3.9px;background:#b8bcc4"></div><div class="a" style="left:598.0px;top:305.10px;width:4px;height:3.9px;background:#d0ccc8"></div><div class="a" style="left:602.0px;top:305.10px;width:4px;height:3.9px;background:#d8d8dc"></div><div class="a" style="left:582.0px;top:309.00px;width:4px;height:4.1px;background:#f0ece8"></div><div class="a" style="left:586.0px;top:309.00px;width:4px;height:4.1px;background:#c4c4c8"></div><div class="a" style="left:590.0px;top:309.00px;width:4px;height:4.1px;background:#c8c8c8"></div><div class="a" style="left:594.0px;top:309.00px;width:4px;height:4.1px;background:#c0c4c8"></div><div class="a" style="left:598.0px;top:309.00px;width:4px;height:4.1px;background:#d4d8dc"></div><div class="a" style="left:602.0px;top:309.00px;width:4px;height:4.1px;background:#f0f0f0"></div>
<div class="t" style="left:605.5px;top:303.00px">0 (Номер ...</div>
<div class="t" style="left:659.5px;top:303.00px">Text - UTF-16 (LE) enc...</div>
<div class="t" style="left:752.6px;top:303.00px">660 байт</div>
<div class="t" style="left:799.8px;top:303.00px;letter-spacing:0.1px">Разрешения протокола</div>
<div class="ic" style="left:234.5px;top:316.40px"><svg width="12" height="12" viewBox="0 0 12 12"><path d="M2 0.7H7.9L10.5 3.3V10.6H2Z" fill="#fff" stroke="#7a7a7a" stroke-width="0.9"/><path d="M10.5 3.2V10.7H1.6" stroke="#222" stroke-width="1.2" fill="none"/><path d="M7.9 0.7V3.3H10.5Z" fill="#444"/><rect x="2.7" y="1.3" width="7.6" height="8.4" fill="#3848f0"/><path d="M8.6 3.2Q7 1.8 5.2 2.8Q3.8 3.8 5.6 4.9L7.4 5.8Q9 7 7.6 8Q5.6 8.9 4 7.6" stroke="#e8ecff" stroke-width="1.2" fill="none"/><path d="M1.8 0.3H4V3.1H5.6L2.9 6.1L0.2 3.1H1.8Z" fill="#f01010"/></svg></div>
<div class="t" style="left:247.8px;top:315.90px">Успех</div>
<div class="t d" style="left:281.5px;top:315.90px">24.12.2018 11:56:20</div>
<div class="t" style="left:357px;top:315.90px">VSamsonov-P...</div>
<div class="t" style="left:424.4px;top:315.90px">Skype</div>
<div class="t" style="left:469.6px;top:315.90px">Чат</div>
<div class="t" style="left:560px;top:315.90px">frost166, live:venom694...</div>
<div class="t" style="left:659.5px;top:315.90px">Text - UTF-16 (LE) enc...</div>
<div class="t" style="left:752.6px;top:315.90px">424 байт</div>
<div class="t" style="left:799.8px;top:315.90px;letter-spacing:0.1px">Разрешения протокола</div>
<div class="ic" style="left:234.5px;top:329.30px"><svg width="12" height="12" viewBox="0 0 12 12"><path d="M2 0.7H7.9L10.5 3.3V10.6H2Z" fill="#fff" stroke="#7a7a7a" stroke-width="0.9"/><path d="M10.5 3.2V10.7H1.6" stroke="#222" stroke-width="1.2" fill="none"/><path d="M7.9 0.7V3.3H10.5Z" fill="#444"/><rect x="2.2" y="7.4" width="8" height="1" fill="#8a8a8a"/><rect x="1.8" y="9.1" width="9" height="1.8" fill="#2a2a2a"/><rect x="5.4" y="3.9" width="4.4" height="3.3" fill="#e4e4ec"/><circle cx="7.7" cy="5.6" r="1.1" fill="#7a7ae0"/><rect x="2.4" y="4.2" width="3" height="3" fill="#8a7a90"/><path d="M0.2 3.5L2.9 0.3L5.6 3.5H4V6.3H1.8V3.5Z" fill="#109a10"/></svg></div>
<div class="t" style="left:247.8px;top:328.80px">Успех</div>
<div class="t d" style="left:281.5px;top:328.80px">24.12.2018 11:55:22</div>
<div class="t" style="left:357px;top:328.80px">mamaev-pc.of...</div>
<div class="t" style="left:424.4px;top:328.80px">MAPI</div>
<div class="t" style="left:469.6px;top:328.80px">Входящее сообщение</div>
<div class="t" style="left:560px;top:328.80px">Andrey Klyushnikov &lt;a...</div>
<div class="t" style="left:659.5px;top:328.80px">E-Mail message (MIME)</div>
<div class="t" style="left:752.6px;top:328.80px">4,16 КБ</div>
<div class="t" style="left:799.8px;top:328.80px;letter-spacing:0.1px">Разрешения протокола</div>
<div class="ic" style="left:234.5px;top:342.20px"><svg width="12" height="12" viewBox="0 0 12 12"><path d="M2 0.7H7.9L10.5 3.3V10.6H2Z" fill="#fff" stroke="#7a7a7a" stroke-width="0.9"/><path d="M10.5 3.2V10.7H1.6" stroke="#222" stroke-width="1.2" fill="none"/><path d="M7.9 0.7V3.3H10.5Z" fill="#444"/><rect x="2.2" y="7.4" width="8" height="1" fill="#8a8a8a"/><rect x="1.8" y="9.1" width="9" height="1.8" fill="#2a2a2a"/><rect x="5.4" y="3.9" width="4.4" height="3.3" fill="#e4e4ec"/><circle cx="7.7" cy="5.6" r="1.1" fill="#7a7ae0"/><rect x="2.4" y="4.2" width="3" height="3" fill="#8a7a90"/><path d="M0.2 3.5L2.9 0.3L5.6 3.5H4V6.3H1.8V3.5Z" fill="#109a10"/></svg></div>
<div class="t" style="left:247.8px;top:341.70px">Успех</div>
<div class="t d" style="left:281.5px;top:341.70px">24.12.2018 11:54:51</div>
<div class="t" style="left:357px;top:341.70px">mamaev-pc.of...</div>
<div class="t" style="left:424.4px;top:341.70px">MAPI</div>
<div class="t" style="left:469.6px;top:341.70px">Входящее сообщение</div>
<div class="t" style="left:560px;top:341.70px">svn &lt;svn@office.device...</div>
<div class="t" style="left:659.5px;top:341.70px">E-Mail message (MIME)</div>
<div class="t" style="left:752.6px;top:341.70px">6,89 КБ</div>
<div class="t" style="left:799.8px;top:341.70px;letter-spacing:0.1px">Разрешения протокола</div>
<div class="ic" style="left:234.5px;top:355.10px"><svg width="12" height="12" viewBox="0 0 12 12"><path d="M2 0.7H7.9L10.5 3.3V10.6H2Z" fill="#fff" stroke="#7a7a7a" stroke-width="0.9"/><path d="M10.5 3.2V10.7H1.6" stroke="#222" stroke-width="1.2" fill="none"/><path d="M7.9 0.7V3.3H10.5Z" fill="#444"/><rect x="2.2" y="7.4" width="8" height="1" fill="#8a8a8a"/><rect x="1.8" y="9.1" width="9" height="1.8" fill="#2a2a2a"/><rect x="5.4" y="3.9" width="4.4" height="3.3" fill="#e4e4ec"/><circle cx="7.7" cy="5.6" r="1.1" fill="#7a7ae0"/><rect x="2.4" y="4.2" width="3" height="3" fill="#8a7a90"/><path d="M0.2 3.5L2.9 0.3L5.6 3.5H4V6.3H1.8V3.5Z" fill="#109a10"/></svg></div>
<div class="t" style="left:247.8px;top:354.60px">Успех</div>
<div class="t d" style="left:281.5px;top:354.60px">24.12.2018 11:54:51</div>
<div class="t" style="left:357px;top:354.60px">mamaev-pc.of...</div>
<div class="t" style="left:424.4px;top:354.60px">MAPI</div>
<div class="t" style="left:469.6px;top:354.60px">Входящее сообщение</div>
<div class="t" style="left:560px;top:354.60px">svn &lt;svn@office.device...</div>
<div class="t" style="left:659.5px;top:354.60px">E-Mail message (MIME)</div>
<div class="t" style="left:752.6px;top:354.60px">1,33 КБ</div>
<div class="t" style="left:799.8px;top:354.60px;letter-spacing:0.1px">Разрешения протокола</div>
<div class="ic" style="left:234.5px;top:368.00px"><svg width="12" height="12" viewBox="0 0 12 12"><path d="M2 0.7H7.9L10.5 3.3V10.6H2Z" fill="#fff" stroke="#7a7a7a" stroke-width="0.9"/><path d="M10.5 3.2V10.7H1.6" stroke="#222" stroke-width="1.2" fill="none"/><path d="M7.9 0.7V3.3H10.5Z" fill="#444"/><rect x="2.2" y="7.4" width="8" height="1" fill="#8a8a8a"/><rect x="1.8" y="9.1" width="9" height="1.8" fill="#2a2a2a"/><rect x="5.4" y="3.9" width="4.4" height="3.3" fill="#e4e4ec"/><circle cx="7.7" cy="5.6" r="1.1" fill="#7a7ae0"/><rect x="2.4" y="4.2" width="3" height="3" fill="#8a7a90"/><path d="M0.2 3.5L2.9 0.3L5.6 3.5H4V6.3H1.8V3.5Z" fill="#109a10"/></svg></div>
<div class="t" style="left:247.8px;top:367.50px">Успех</div>
<div class="t d" style="left:281.5px;top:367.50px">24.12.2018 11:54:51</div>
<div class="t" style="left:357px;top:367.50px">mamaev-pc.of...</div>
<div class="t" style="left:424.4px;top:367.50px">MAPI</div>
<div class="t" style="left:469.6px;top:367.50px">Входящее сообщение</div>
<div class="t" style="left:560px;top:367.50px">svn &lt;svn@office.device...</div>
<div class="t" style="left:659.5px;top:367.50px">E-Mail message (MIME)</div>
<div class="t" style="left:752.6px;top:367.50px">2,03 КБ</div>
<div class="t" style="left:799.8px;top:367.50px;letter-spacing:0.1px">Разрешения протокола</div>
<div class="ic" style="left:234.5px;top:380.90px"><svg width="12" height="12" viewBox="0 0 12 12"><path d="M2 0.7H7.9L10.5 3.3V10.6H2Z" fill="#fff" stroke="#7a7a7a" stroke-width="0.9"/><path d="M10.5 3.2V10.7H1.6" stroke="#222" stroke-width="1.2" fill="none"/><path d="M7.9 0.7V3.3H10.5Z" fill="#444"/><rect x="2.2" y="7.4" width="8" height="1" fill="#8a8a8a"/><rect x="1.8" y="9.1" width="9" height="1.8" fill="#2a2a2a"/><rect x="5.4" y="3.9" width="4.4" height="3.3" fill="#e4e4ec"/><circle cx="7.7" cy="5.6" r="1.1" fill="#7a7ae0"/><rect x="2.4" y="4.2" width="3" height="3" fill="#8a7a90"/><path d="M0.2 3.5L2.9 0.3L5.6 3.5H4V6.3H1.8V3.5Z" fill="#109a10"/></svg></div>
</div>

<!-- tree items -->
<div class="a" style="left:33.3px;top:118.6px;width:194px;height:12.3px;background:#f2f2f2;border:1px solid #e2e2e2"></div>
<svg class="a" style="left:8.5px;top:58px" width="12" height="11" viewBox="0 0 12 11">
<defs><linearGradient id="scr2" x1="0" x2="1" y1="0" y2="1"><stop offset="0" stop-color="#80d0f8"/><stop offset="0.55" stop-color="#1a78c8"/><stop offset="1" stop-color="#0a4890"/></linearGradient></defs>
<path d="M4 0.4h7.6l-0.8 6.4h-7.8z" fill="#2a3038"/><path d="M4.8 1.1h6l-0.6 5h-6.2z" fill="url(#scr2)"/><circle cx="7.4" cy="3.6" r="1" fill="#e8c838"/>
<path d="M0.2 8.6l3-2.2h7.8l-1.4 3-2 1.6h-6.4z" fill="#3a3a40"/><path d="M1.6 8.6h6.6M1.2 9.6h5.8" stroke="#b8b8b8" stroke-width="0.6"/></svg>
<div class="tr" style="left:23.2px;top:57.4px">DeviceLock</div>

<svg class="a" style="left:13px;top:73.4px" width="5" height="7" viewBox="0 0 5 7"><path d="M0.6 0.6L4.2 3.5L0.6 6.4z" fill="#fff" stroke="#6a6a6a" stroke-width="0.9"/></svg>
<svg class="a" style="left:21.5px;top:70.2px" width="12" height="11" viewBox="0 0 12 11">
<path d="M5.6 3.6v-1.3q0-1.9 2.1-1.9t2.1 1.9v1.3" stroke="#a88020" stroke-width="1.2" fill="none"/><rect x="4.6" y="3.4" width="6.4" height="6" fill="#d8a828" stroke="#a07818" stroke-width="0.6"/>
<circle cx="3.4" cy="7.6" r="2.9" fill="#5a88c0" stroke="#3a5a88" stroke-width="0.8" stroke-dasharray="1.2 0.6"/><circle cx="3.4" cy="7.6" r="1.6" fill="#e8f0f8"/></svg>
<div class="tr" style="left:36.2px;top:70px">Сервис DeviceLock</div>

<svg class="a" style="left:13px;top:86.3px" width="5" height="5" viewBox="0 0 5 5"><path d="M4.6 0.4V4.6H0.4z" fill="#444"/></svg>
<svg class="a" style="left:21.8px;top:82.6px" width="12" height="11" viewBox="0 0 12 11">
<rect x="0.6" y="0.6" width="6.8" height="9.6" fill="#f0d898" stroke="#c09848" stroke-width="0.9"/><path d="M1.8 2.4h4M1.8 4.2h2.6" stroke="#88b8e0" stroke-width="1"/><rect x="1.8" y="6" width="2" height="2" fill="#e8a060"/>
<circle cx="7.6" cy="7.2" r="3.2" fill="#48607c" stroke="#2a3a50" stroke-width="0.8" stroke-dasharray="1.3 0.7"/><circle cx="7.6" cy="7.2" r="1.4" fill="#e0e8f0"/></svg>
<div class="tr" style="left:36.6px;top:82.3px">DeviceLock Enterprise Server (dlsrv, TL\Administrator)</div>

<svg class="a" style="left:26px;top:98.5px" width="5" height="7" viewBox="0 0 5 7"><path d="M0.6 0.6L4.2 3.5L0.6 6.4z" fill="#fff" stroke="#6a6a6a" stroke-width="0.9"/></svg>
<svg class="a" style="left:34.3px;top:94.6px" width="11" height="11" viewBox="0 0 11 11">
<path d="M5.5 0.3l1.2 2 2.2-0.9-0.3 2.3 2.2 0.8-1.8 1.5 1.3 1.9-2.3 0.3-0.1 2.3-2-1.1-1.6 1.7-0.9-2.1-2.3 0.5 0.6-2.2-2.1-1.1 2-1.3-1-2.1 2.3 0.1 0.5-2.3 1.6 1.6z" fill="#e8e020" stroke="#3a3a20" stroke-width="0.9"/>
<circle cx="5.5" cy="5.5" r="1.7" fill="#c8c018" stroke="#333" stroke-width="0.7"/><path d="M5.5 2v2M5.5 7v2M2 5.5h2M7 5.5h2" stroke="#333" stroke-width="0.5"/></svg>
<div class="tr" style="left:49.3px;top:94.6px;letter-spacing:0.03px">Настройки сервера</div>

<svg class="a" style="left:34.4px;top:106.9px" width="11" height="11" viewBox="0 0 11 11">
<path d="M8.6 3V10.4H0.7V0.7H7.5" fill="#fff" stroke="#555" stroke-width="1"/><path d="M0.6 10.4H8.7" stroke="#222" stroke-width="1.2"/><rect x="2" y="3.6" width="4.4" height="4" fill="#5860f0"/>
<path d="M4.8 8.4l5-5" stroke="#d8d020" stroke-width="1.8"/><path d="M4.8 8.4l5-5" stroke="#505010" stroke-width="0.5"/><path d="M9.2 2.2l1.4 1.2" stroke="#e02020" stroke-width="1.5"/></svg>
<div class="tr" style="left:49.3px;top:106.8px;letter-spacing:0.12px">Просмотрщик журнала аудита</div>

<svg class="a" style="left:26px;top:122.9px" width="5" height="7" viewBox="0 0 5 7"><path d="M0.6 0.6L4.2 3.5L0.6 6.4z" fill="#fff" stroke="#6a6a6a" stroke-width="0.9"/></svg>
<svg class="a" style="left:34.4px;top:119.3px" width="11" height="11" viewBox="0 0 11 11">
<path d="M8.6 3V10.4H0.7V0.7H7.5" fill="#fff" stroke="#555" stroke-width="1"/><rect x="2" y="3" width="4" height="4" fill="#5860f0"/>
<circle cx="7" cy="7.3" r="3" fill="#d8d020" stroke="#2a2a10" stroke-width="1" stroke-dasharray="1.3 0.6"/><circle cx="7" cy="7.3" r="1.1" fill="#3a3a18"/></svg>
<div class="tr" style="left:49.3px;top:119px;letter-spacing:0.145px">Просмотрщик журнала теневого копирования</div>

<svg class="a" style="left:34.4px;top:131.5px" width="11" height="11" viewBox="0 0 11 11">
<rect x="2" y="0.8" width="5.6" height="6.4" rx="0.8" fill="#333" /><rect x="2.9" y="1.7" width="3.8" height="3.4" fill="#2040e8"/><rect x="4.4" y="5.2" width="6.2" height="5.4" fill="#fff" stroke="#333" stroke-width="0.9"/><rect x="5.2" y="6" width="4.6" height="2" fill="#f07888"/><rect x="5.2" y="8" width="4.6" height="1.8" fill="#7890f0"/><path d="M0.2 7.4h4" stroke="#30c030" stroke-width="1"/></svg>
<div class="tr" style="left:49.3px;top:131.2px;letter-spacing:0.11px">Просмотрщик журнала сервера</div>

<svg class="a" style="left:34.3px;top:143.3px" width="12" height="12" viewBox="0 0 12 12">
<path d="M0.6 1.6q0-1 1-1h4q1 0 1 1v9.8h-6z" fill="#505050" stroke="#222" stroke-width="0.8"/><path d="M1.6 2.6h3.6M1.6 4.2h3.6" stroke="#d8d8d8" stroke-width="0.8"/><rect x="1.8" y="6.2" width="3" height="3.6" fill="#e0e0e0"/><rect x="3" y="8" width="1" height="1.2" fill="#d02020"/>
<rect x="5.6" y="6" width="5.8" height="5.4" fill="#fff" stroke="#333" stroke-width="0.9"/><rect x="6.4" y="6.8" width="4.2" height="1.9" fill="#f07888"/><rect x="6.4" y="8.7" width="4.2" height="1.9" fill="#7890f0"/></svg>
<div class="tr" style="left:49.3px;top:143.4px;letter-spacing:0.06px">Серверы консолидации</div>

<svg class="a" style="left:26px;top:159px" width="5" height="7" viewBox="0 0 5 7"><path d="M0.6 0.6L4.2 3.5L0.6 6.4z" fill="#fff" stroke="#6a6a6a" stroke-width="0.9"/></svg>
<svg class="a" style="left:34.3px;top:155.6px" width="11" height="12" viewBox="0 0 11 12">
<rect x="1" y="5" width="3.6" height="6.4" rx="1.2" fill="#c8c8c8" stroke="#333" stroke-width="0.8"/><rect x="6.4" y="0.6" width="3.6" height="6.4" rx="1.2" fill="#c8c8c8" stroke="#333" stroke-width="0.8"/>
<circle cx="2.8" cy="9" r="0.7" fill="#e03030"/><circle cx="8.2" cy="4.6" r="0.7" fill="#e03030"/><path d="M0.6 3.6l3.4-2M2.6 0.8l1.6 0.8-0.8 1.4" stroke="#1830f0" stroke-width="1.1" fill="none"/><path d="M10.4 9.2l-3.6 2M8.4 12l-1.6-0.8 0.8-1.4" stroke="#1830f0" stroke-width="1.1" fill="none"/></svg>
<div class="tr" style="left:49.3px;top:155.6px;letter-spacing:0.32px">Мониторинг</div>

<svg class="a" style="left:26px;top:171.2px" width="5" height="7" viewBox="0 0 5 7"><path d="M0.6 0.6L4.2 3.5L0.6 6.4z" fill="#fff" stroke="#6a6a6a" stroke-width="0.9"/></svg>
<svg class="a" style="left:34.4px;top:168px" width="11" height="11" viewBox="0 0 11 11">
<path d="M0.6 1.4h3.8l1 1.2h5v7.8h-9.8z" fill="#e8d848" stroke="#2a2a2a" stroke-width="1"/><path d="M0.6 4h9.8" stroke="#a89828" stroke-width="0.6"/><rect x="3" y="5" width="6" height="4.6" fill="#fff" stroke="#333" stroke-width="0.6"/><rect x="3.6" y="5.6" width="4.8" height="1.6" fill="#e85868"/><rect x="3.6" y="7.4" width="4.8" height="1.6" fill="#6078e0"/></svg>
<div class="tr" style="left:49.3px;top:167.8px;letter-spacing:0.1px">Отчеты</div>

<svg class="a" style="left:26px;top:183.4px" width="5" height="7" viewBox="0 0 5 7"><path d="M0.6 0.6L4.2 3.5L0.6 6.4z" fill="#fff" stroke="#6a6a6a" stroke-width="0.9"/></svg>
<svg class="a" style="left:34px;top:180px" width="11" height="12" viewBox="0 0 11 12">
<path d="M2.6 0.6h5l2.6 2.6v8.2h-7.6z" fill="#f8f8f8" stroke="#b8b8b8" stroke-width="0.9"/><circle cx="3.6" cy="5" r="2.8" fill="#d8d8e8" stroke="#9a9aaa" stroke-width="0.8" stroke-dasharray="1 0.6"/><path d="M2.4 4.2l2.4 1.6M4.8 4.2l-2.4 1.6" stroke="#6070e0" stroke-width="0.7"/><circle cx="4" cy="9" r="1.8" fill="#e8e8e8" stroke="#9a9a9a" stroke-width="0.7"/></svg>
<div class="tr" style="left:49.3px;top:180px;letter-spacing:0.12px">Политики</div>

<svg class="a" style="left:26px;top:195.6px" width="5" height="7" viewBox="0 0 5 7"><path d="M0.6 0.6L4.2 3.5L0.6 6.4z" fill="#fff" stroke="#6a6a6a" stroke-width="0.9"/></svg>
<svg class="a" style="left:34.4px;top:192.2px" width="11" height="12" viewBox="0 0 11 12">
<circle cx="5.8" cy="4.8" r="4.4" fill="#9a9a9a" stroke="#2a2a2a" stroke-width="0.9"/><path d="M3.4 3q2.4-2 4.8 0M2.6 5q3.2-3 6.4 0M4 6.4q1.8-1.6 3.6 0" stroke="#fff" stroke-width="0.6" fill="none"/><circle cx="5.2" cy="7.4" r="2" fill="#30d0e8" stroke="#1a3a40" stroke-width="0.9"/><path d="M3.8 8.8l-3 2.8" stroke="#1a4a50" stroke-width="1.4"/></svg>
<div class="tr" style="left:49.3px;top:192.2px;letter-spacing:0.07px">Цифровые отпечатки</div>

<svg class="a" style="left:13px;top:208px" width="5" height="7" viewBox="0 0 5 7"><path d="M0.6 0.6L4.2 3.5L0.6 6.4z" fill="#fff" stroke="#6a6a6a" stroke-width="0.9"/></svg>
<svg class="a" style="left:21.6px;top:204px" width="12" height="12" viewBox="0 0 12 12">
<rect x="0.6" y="0.6" width="8.6" height="10" fill="#f4e0a0" stroke="#c8a048" stroke-width="0.9"/><path d="M1.8 2.4h3M1.8 4h2" stroke="#e8a040" stroke-width="0.8"/><circle cx="6.6" cy="6.4" r="3.4" fill="#d8eefa" stroke="#3a4a58" stroke-width="0.9"/><path d="M8.9 8.8l2.6 2.6" stroke="#a05828" stroke-width="1.5"/></svg>
<div class="tr" style="left:36.2px;top:204.5px">DeviceLock Content Security Server</div>

<div class="a" style="left:157.5px;top:305.5px;width:1.2px;height:1.2px;background:#555"></div>
<!-- tree hscroll -->
<div class="a" style="left:6.8px;top:383.2px;width:221.4px;height:10.6px;background:#e8e8e8;border-top:1px solid #d8d8d8"></div>
<div class="a" style="left:6.8px;top:383.8px;width:11.6px;height:10px;background:#fff"></div>
<svg class="a" style="left:10.6px;top:386px" width="5" height="6" viewBox="0 0 5 6"><path d="M3.8 0.5L1 3L3.8 5.5" stroke="#555" stroke-width="1" fill="none"/></svg>
<div class="a" style="left:18.4px;top:383.8px;width:145.6px;height:10px;background:#dcdcdc;border-left:1px solid #b8b8b8;border-right:1px solid #b8b8b8"></div>
<div class="a" style="left:88.5px;top:386.5px;width:4px;height:4px;border-left:1px solid #666;border-right:1px solid #666"></div><div class="a" style="left:90px;top:386.5px;width:1px;height:4px;background:#666"></div>
<div class="a" style="left:164px;top:383.8px;width:52px;height:10px;background:#fff"></div>
<div class="a" style="left:216px;top:383.8px;width:11.5px;height:10px;background:#fff;border-left:1px solid #e0e0e0"></div>
<svg class="a" style="left:219.5px;top:386px" width="5" height="6" viewBox="0 0 5 6"><path d="M1.2 0.5L4 3L1.2 5.5" stroke="#555" stroke-width="1" fill="none"/></svg>

<!-- list vscroll -->
<div class="a" style="left:918px;top:57px;width:11px;height:326.5px;background:#fff;border-left:1px solid #e4e4e4"></div>
<svg class="a" style="left:920.5px;top:60.5px" width="7" height="5" viewBox="0 0 7 5"><path d="M0.8 4L3.5 1.2L6.2 4" stroke="#555" stroke-width="1" fill="none"/></svg>
<div class="a" style="left:918.2px;top:68.7px;width:10.6px;height:11.8px;background:#dadada;border:1px solid #bdbdbd"></div>
<div class="a" style="left:918px;top:371.4px;width:11px;height:11.2px;background:#fff;border-top:1px solid #e4e4e4;border-left:1px solid #e4e4e4"></div>
<svg class="a" style="left:920.5px;top:374.5px" width="7" height="5" viewBox="0 0 7 5"><path d="M0.8 1L3.5 3.8L6.2 1" stroke="#555" stroke-width="1" fill="none"/></svg>
<!-- list hscroll -->
<div class="a" style="left:232px;top:383.2px;width:697px;height:10.8px;background:#fff;border-top:1px solid #d8d8d8"></div>
<svg class="a" style="left:235.5px;top:386px" width="5" height="6" viewBox="0 0 5 6"><path d="M3.8 0.5L1 3L3.8 5.5" stroke="#555" stroke-width="1" fill="none"/></svg>
<div class="a" style="left:244px;top:383.8px;width:333.6px;height:10.2px;background:#dcdcdc;border-left:1px solid #b8b8b8;border-right:1px solid #b8b8b8"></div>
<div class="a" style="left:408.5px;top:386.5px;width:4px;height:4px;border-left:1px solid #666;border-right:1px solid #666"></div><div class="a" style="left:410px;top:386.5px;width:1px;height:4px;background:#666"></div>
<div class="a" style="left:906.4px;top:383.8px;width:11.5px;height:10.2px;background:#fff;border-left:1px solid #e0e0e0"></div>
<svg class="a" style="left:910px;top:386px" width="5" height="6" viewBox="0 0 5 6"><path d="M1.2 0.5L4 3L1.2 5.5" stroke="#555" stroke-width="1" fill="none"/></svg>
<div class="a" style="left:918px;top:383.8px;width:11px;height:10.2px;background:#f0f0f0"></div>

<!-- bottom separator + status bar -->
<div class="a" style="left:5.3px;top:394px;width:925.4px;height:2.4px;background:#a8a8b0"></div>
<div class="a" style="left:5.3px;top:396.4px;width:925px;height:14.6px;background:#fff;border-bottom:1px solid #e8e8e8"></div>
<div class="a" style="left:780.5px;top:397px;width:1px;height:13.5px;background:#e0e0e0"></div>
<div class="a" style="left:871px;top:397px;width:1px;height:13.5px;background:#e0e0e0"></div>
<div class="tr" style="left:7px;top:398.2px">Всего: 778</div>
</body></html>
